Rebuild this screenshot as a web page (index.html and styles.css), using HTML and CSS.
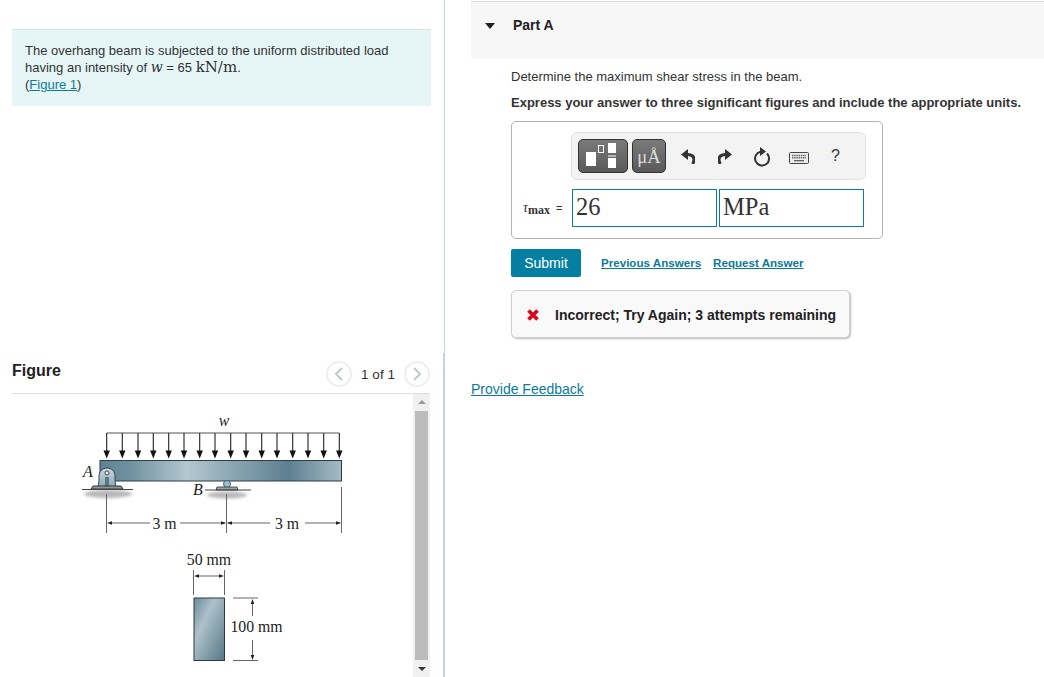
FILE: index.html
```html
<!DOCTYPE html>
<html lang="en">
<head>
<meta charset="utf-8">
<title>Part A</title>
<link rel="stylesheet" href="styles.css">
</head>
<body>
<div class="page">
  <section class="left">
    <div class="intro-wrap">
      <div class="intro">
        <p>The overhang beam is subjected to the uniform distributed load<br>having an intensity of <i class="mi">w</i> = 65 <span class="unit">kN/m</span>.<br>(<a href="#">Figure 1</a>)</p>
      </div>
    </div>
    <div class="figure">
      <div class="fig-head">
        <h2>Figure</h2>
        <div class="pager">
          <span class="circle"><svg width="10" height="14" viewBox="0 0 10 14"><path d="M8 1 2 7l6 6" fill="none" stroke="#c4c9cf" stroke-width="2"/></svg></span>
          <span class="count">1 of 1</span>
          <span class="circle"><svg width="10" height="14" viewBox="0 0 10 14"><path d="m2 1 6 6-6 6" fill="none" stroke="#c4c9cf" stroke-width="2"/></svg></span>
        </div>
      </div>
      <div class="fig-scroll">
        <div class="fig-canvas">
          <svg class="diagram" width="401" height="283" viewBox="12 394 401 283">
            <defs>
              <linearGradient id="beam" x1="0" x2="1" y1="0" y2="0">
                <stop offset="0" stop-color="#5f8294"/>
                <stop offset=".12" stop-color="#6f909f"/>
                <stop offset=".36" stop-color="#b3c7cf"/>
                <stop offset=".55" stop-color="#8ba6b3"/>
                <stop offset=".78" stop-color="#5d7f90"/>
                <stop offset="1" stop-color="#a5bbc5"/>
              </linearGradient>
              <linearGradient id="sect" x1="0" x2="1" y1="0" y2="1">
                <stop offset="0" stop-color="#6c8b9b"/>
                <stop offset=".35" stop-color="#adc1ca"/>
                <stop offset="1" stop-color="#567686"/>
              </linearGradient>
              <linearGradient id="pin" x1="0" x2="0" y1="0" y2="1">
                <stop offset="0" stop-color="#c5d6de"/>
                <stop offset="1" stop-color="#8fabb9"/>
              </linearGradient>
              <filter id="soft" x="-20%" y="-80%" width="140%" height="260%"><feGaussianBlur stdDeviation="1.6"/></filter>
              <g id="arrow">
                <path d="M0 433v19" stroke="#222" stroke-width="1.1" fill="none"/>
                <path d="M-3.2 450.5h6.4L0 458.5z" fill="#111"/>
              </g>
            </defs>
            <text class="lbl it" x="224" y="426" text-anchor="middle">w</text>
            <path d="M106.7 433h232.6" stroke="#555" stroke-width="1"/>
            <use href="#arrow" x="106.7"/><use href="#arrow" x="122.3"/><use href="#arrow" x="138"/><use href="#arrow" x="153.3"/>
            <use href="#arrow" x="168.7"/><use href="#arrow" x="184"/><use href="#arrow" x="199.7"/><use href="#arrow" x="215"/>
            <use href="#arrow" x="230.7"/><use href="#arrow" x="246"/><use href="#arrow" x="261.7"/><use href="#arrow" x="277"/>
            <use href="#arrow" x="292.7"/><use href="#arrow" x="308"/><use href="#arrow" x="323.7"/><use href="#arrow" x="339.3"/>

            <rect x="100" y="460.5" width="241.5" height="20.5" fill="url(#beam)" stroke="#2f3d45" stroke-width="1"/>

            <ellipse cx="108" cy="494" rx="24" ry="4" fill="#b9b9b9" filter="url(#soft)"/>
            <ellipse cx="227" cy="495" rx="20" ry="3.500" fill="#b9b9b9" filter="url(#soft)"/>

            <path d="M98 487c1-4 1-7 1-11 0-4 3-8 8-8s8 4 8 8c0 4 0 7 1 11z" fill="url(#pin)" stroke="#33434c" stroke-width="1"/>
            <circle cx="107" cy="473" r="2" fill="#fff" stroke="#444"/>
            <rect x="105" y="477" width="4" height="10" fill="#5d7786"/>
            <path d="M91 489l2-3h28l2 3z" fill="#8c989e" stroke="#333" stroke-width="1"/>
            <path d="M82 489.500h51" stroke="#444" stroke-width="1"/>

            <circle cx="227" cy="484" r="3.500" fill="#9cc0cf" stroke="#45606e"/>
            <path d="M216 490l1-3h20l1 3z" fill="#99a4a9" stroke="#333" stroke-width=".8"/>
            <path d="M205 490h46" stroke="#444" stroke-width="1"/>

            <text class="lbl it big" x="83" y="477">A</text>
            <text class="lbl it big" x="193" y="495">B</text>

            <g stroke="#666" stroke-width="1" fill="none">
              <path d="M106.500 494v39M226.500 494v39M341.500 487v46"/>
              <path d="M110 523h40M180 523h45M228 523h42M305 523h35"/>
            </g>
            <g fill="#222">
              <path d="M107 523l5-1.800v3.600zM226 523l-5-1.800v3.600zM227 523l5-1.800v3.600zM341 523l-5-1.800v3.600z"/>
            </g>
            <text class="lbl" x="164.500" y="529" text-anchor="middle">3 m</text>
            <text class="lbl" x="287" y="529" text-anchor="middle">3 m</text>

            <text class="lbl" x="209" y="565" text-anchor="middle">50 mm</text>
            <g stroke="#666" stroke-width="1" fill="none">
              <path d="M193.500 570v25M224.500 570v25M197 576h24"/>
              <path d="M233 598h25M233 660.500h25M252.500 602v14M252.500 640v17"/>
            </g>
            <g fill="#222">
              <path d="M194 576l5-1.800v3.600zM224 576l-5-1.800v3.600zM252.500 599l-1.800 5h3.600zM252.500 660l-1.800-5h3.600z"/>
            </g>
            <rect x="194" y="598" width="30.500" height="62.500" fill="url(#sect)" stroke="#2c3a42" stroke-width="1"/>
            <text class="lbl" x="256.500" y="632" text-anchor="middle">100 mm</text>
          </svg>
        </div>
        <div class="scrollbar">
          <span class="tri up"></span>
          <span class="thumb"></span>
          <span class="tri down"></span>
        </div>
      </div>
    </div>
  </section>

  <section class="right">
    <header class="part-head">
      <span class="caret"></span>
      <h3>Part A</h3>
    </header>
    <div class="part-body">
      <p class="q">Determine the maximum shear stress in the beam.</p>
      <p class="instr">Express your answer to three significant figures and include the appropriate units.</p>

      <div class="answer">
        <div class="toolbar">
          <span class="btn btn-tpl">
            <svg width="50" height="34" viewBox="0 0 50 34">
              <rect x="8" y="13" width="10" height="14" fill="#fff"/>
              <rect x="20.500" y="6.500" width="5" height="7" fill="none" stroke="#fff"/>
              <rect x="30" y="4" width="8" height="10" fill="#fff"/>
              <rect x="30" y="16.500" width="8" height="1" fill="#fff"/>
              <rect x="30" y="19" width="8" height="10" fill="#fff"/>
            </svg>
          </span>
          <span class="btn btn-unit">μÅ</span>
          <span class="tool"><svg width="14" height="15" viewBox="0 0 14 15"><path d="M0 5.500 7 0v11z" fill="#333"/><path d="M6 5.500c4.500 0 7 1.500 7 5 0 2-.6 3-1.300 4.500" fill="none" stroke="#333" stroke-width="3"/></svg></span>
          <span class="tool"><svg width="14" height="15" viewBox="0 0 14 15"><path d="M14 5.500 7 0v11z" fill="#333"/><path d="M8 5.500c-4.500 0-7 1.500-7 5 0 2 .6 3 1.300 4.500" fill="none" stroke="#333" stroke-width="3"/></svg></span>
          <span class="tool tool-reset"><svg width="18" height="20" viewBox="0 0 18 20"><path d="M14 6.500A7 7 0 1 1 7.500 4.700" fill="none" stroke="#333" stroke-width="2"/><path d="M7 0v9l6-4.500z" fill="#333"/></svg></span>
          <span class="tool tool-keys"><svg width="20" height="12" viewBox="0 0 20 12"><rect x=".5" y=".5" width="19" height="11" rx="1" fill="#eee" stroke="#444"/><path d="M3 3.500h14M3 5.800h14" stroke="#666" stroke-width="1.400" stroke-dasharray="1.500 .7"/><path d="M5 8.700h10" stroke="#666" stroke-width="1.400"/></svg></span>
          <span class="tool help">?</span>
        </div>
        <div class="entry">
          <span class="var"><i>τ</i><sub>max</sub><span class="eq">=</span></span>
          <span class="field">26</span>
          <span class="field">MPa</span>
        </div>
      </div>

      <div class="actions">
        <button class="submit" type="button">Submit</button>
        <a href="#" class="act-link">Previous Answers</a>
        <a href="#" class="act-link">Request Answer</a>
      </div>

      <div class="result">
        <svg width="14" height="14" viewBox="0 0 14 14"><path d="M2.500 2.500l9 9M11.500 2.500l-9 9" stroke="#d8071c" stroke-width="3.800" fill="none"/></svg>
        <span>Incorrect; Try Again; 3 attempts remaining</span>
      </div>
    </div>
    <a href="#" class="feedback">Provide Feedback</a>
  </section>
</div>
</body>
</html>
```
FILE: styles.css
```css
* { box-sizing: border-box; }
html, body { margin: 0; height: 100%; overflow: hidden; background: #fff; }
body { font-family: "Liberation Sans", Arial, sans-serif; color: #333; font-size: 14px; }
a { color: #0b7a9b; }

.page { display: flex; height: 677px; }

.left {
  width: 445px;
  flex: none;
  border-right: 1px solid #c2d3e2;
  display: flex;
  flex-direction: column;
}
.intro-wrap { height: 353px; flex: none; padding: 29px 13px 0 12px; }
.intro {
  height: 77px;
  background: #e6f6f7;
  border-top: 1px solid #d9e3e3;
  padding: 12px 13px;
  color: #333;
  font-size: 13px;
  line-height: 17px;
}
.intro p { margin: 0; }
.mi { font-family: "DejaVu Serif", serif; font-size: 14px; }
.unit { font-family: "DejaVu Serif", serif; font-size: 15px; font-weight: 500; }

.figure {
  flex: 1;
  min-height: 0;
  padding: 0 13px 0 12px;
  border-right: 1px solid #c2d3e2;
  display: flex;
  flex-direction: column;
}
.fig-head {
  height: 41px;
  flex: none;
  display: flex;
  justify-content: space-between;
  align-items: flex-start;
  border-bottom: 1px solid #ddd;
}
.fig-head h2 { margin: 9px 0 0; font-size: 16px; line-height: 18px; color: #222; }
.pager { display: flex; align-items: center; margin-top: 8px; color: #333; font-size: 13.500px; }
.count { width: 52px; text-align: center; }
.circle {
  width: 26px; height: 26px;
  border: 2px solid #eee;
  border-radius: 50%;
  display: flex; align-items: center; justify-content: center;
}

.fig-scroll { flex: 1; min-height: 0; display: flex; }
.fig-canvas { width: 401px; flex: none; overflow: hidden; }
.diagram { display: block; }
.lbl { font-family: "Liberation Serif", serif; font-size: 15.800px; fill: #222; }
.it { font-style: italic; }
.big { font-size: 16px; }

.scrollbar {
  width: 17px; flex: none;
  background: #f0f0f0;
  display: flex; flex-direction: column; align-items: center;
  padding-top: 6px;
}
.thumb { width: 13px; height: 249px; background: #bcbcbc; margin: 7px 0 7px; }
.tri { width: 0; height: 0; border-left: 4px solid transparent; border-right: 4px solid transparent; }
.tri.up { border-bottom: 4px solid #999; }
.tri.down { border-top: 4px solid #333; }

.right { flex: 1; padding-left: 26px; min-width: 0; }
.part-head {
  margin-top: 1px;
  height: 58px;
  background: #f7f7f7;
  border-top: 1px solid #ddd;
  display: flex; align-items: flex-start;
  padding: 14px 0 0 14px;
}
.caret {
  width: 0; height: 0; margin-top: 7px;
  border-left: 5px solid transparent; border-right: 5px solid transparent;
  border-top: 6px solid #222;
}
.part-head h3 { margin: 0 0 0 18px; font-size: 14px; line-height: 18px; color: #222; }

.part-body { padding-left: 40px; }
.q { margin: 9px 0 0; font-size: 13px; line-height: 18px; color: #333; }
.instr { margin: 8px 0 0; font-size: 13px; line-height: 18px; font-weight: bold; color: #333; }

.answer {
  margin-top: 9px;
  width: 372px; height: 118px;
  border: 1px solid #b3b3b3;
  border-radius: 5px;
  padding: 10px 0 0 59px;
}
.toolbar {
  width: 295px; height: 48px;
  background: #f3f3f3;
  border: 1px solid #e2e2e2;
  border-radius: 6px;
  display: flex; align-items: center;
  padding-left: 6px;
}
.btn {
  height: 34px;
  background: linear-gradient(#7a7a7a, #5a5a5a);
  border: 1px solid #333;
  border-radius: 5px;
  display: flex; align-items: center; justify-content: center;
  flex: none;
}
.btn-tpl { width: 50px; }
.btn-tpl svg { margin: -1px; }
.btn-unit { width: 34px; margin-left: 4px; margin-right: 3px; color: #ddd; font-family: "Liberation Serif", serif; font-size: 18.500px; padding-top: 2px; }
.tool { width: 37px; flex: none; display: flex; align-items: center; justify-content: center; }
.tool-reset { padding-top: 2px; }
.tool-keys { padding-top: 4px; }
.help { font-size: 16px; color: #333; }

.entry { display: flex; align-items: center; margin-top: 9px; margin-left: -49px; }
.var { width: 50px; padding-left: 1px; font-family: "Liberation Serif", serif; color: #333; white-space: nowrap; }
.var i { font-size: 14px; }
.var sub { font-size: 12px; font-weight: bold; line-height: 0; vertical-align: -2px; }
.eq { font-family: "Liberation Sans", sans-serif; font-size: 11px; margin-left: 6px; }
.field {
  width: 145px; height: 38px;
  border: 1px solid #0a7c9e;
  margin-right: 2px;
  padding-left: 3px;
  font-family: "Liberation Serif", serif;
  font-size: 24.500px;
  line-height: 34px;
  color: #333;
}

.actions { display: flex; align-items: center; margin-top: 10px; }
.submit {
  width: 70px; height: 28px;
  background: #047fa2;
  color: #fff;
  border: 0;
  border-radius: 2px;
  padding: 0;
  font: 14px "Liberation Sans", Arial, sans-serif;
}
.act-link { font-size: 11.600px; font-weight: bold; margin: 0 0 2px 12px; }
.submit + .act-link { margin-left: 20px; }

.result {
  margin-top: 13px;
  width: 339px; height: 48px;
  background: #f9f9f9;
  border: 1px solid #d0d0d0;
  border-radius: 5px;
  box-shadow: 1px 1px 2px #bbb;
  display: flex; align-items: center;
  padding: 2px 0 0 14px;
  gap: 15px;
  font-size: 14px; font-weight: bold; color: #222;
}

.feedback { display: block; margin-top: 42px; font-size: 14px; line-height: 18px; }
```
